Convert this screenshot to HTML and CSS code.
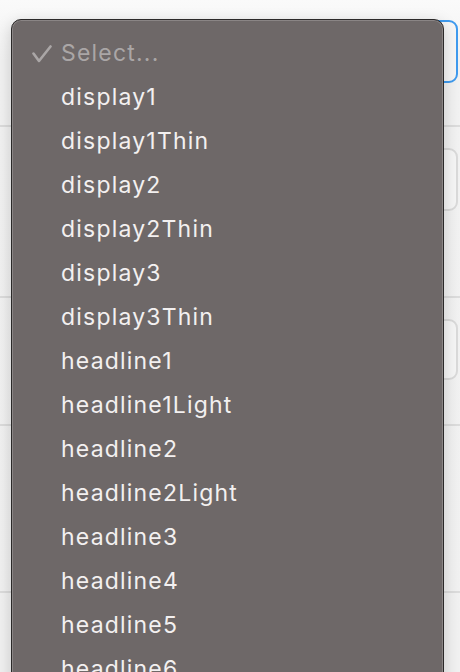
FILE: index.html
```html
<!DOCTYPE html>
<html lang="en">
<head>
    <meta charset="UTF-8">
    <meta name="viewport" content="width=device-width, initial-scale=1.0">
    <title>Text Style Picker</title>
    <link rel="stylesheet" href="styles.css">
</head>
<body>
    <!-- Form behind the open popup -->
    <div class="form">
        <div class="form-row row-first">
            <div class="field field-focus"></div>
        </div>
        <div class="form-row row-second">
            <div class="field"></div>
        </div>
        <div class="form-row row-third">
            <div class="field"></div>
        </div>
        <div class="form-row row-fourth"></div>
        <div class="form-row row-fifth"></div>
    </div>

    <!-- Open popup menu -->
    <div class="menu">
        <ul class="menu-list">
            <li class="menu-item placeholder">
                <span class="check">
                    <svg width="20" height="20" viewBox="0 0 20 20"><polyline points="1.5,8.5 7,16 18.5,1.5" fill="none" stroke="currentColor" stroke-width="2.6" stroke-linecap="round" stroke-linejoin="round"/></svg>
                </span>Select...
            </li>
            <li class="menu-item"><span class="check"></span>display1</li>
            <li class="menu-item"><span class="check"></span>display1Thin</li>
            <li class="menu-item"><span class="check"></span>display2</li>
            <li class="menu-item"><span class="check"></span>display2Thin</li>
            <li class="menu-item"><span class="check"></span>display3</li>
            <li class="menu-item"><span class="check"></span>display3Thin</li>
            <li class="menu-item"><span class="check"></span>headline1</li>
            <li class="menu-item"><span class="check"></span>headline1Light</li>
            <li class="menu-item"><span class="check"></span>headline2</li>
            <li class="menu-item"><span class="check"></span>headline2Light</li>
            <li class="menu-item"><span class="check"></span>headline3</li>
            <li class="menu-item"><span class="check"></span>headline4</li>
            <li class="menu-item"><span class="check"></span>headline5</li>
            <li class="menu-item"><span class="check"></span>headline6</li>
        </ul>
    </div>
</body>
</html>
```

FILE: styles.css
```css
/* Page */
body {
    margin: 0;
    height: 672px;
    overflow: hidden;
    position: relative;
    font-family: 'Inter', 'Roboto', sans-serif;
    background: linear-gradient(180deg, #fafafa 0%, #f2f2f2 60px, #f1f1f1 100%);
}

/* Form rows behind the menu */
.form {
    display: flex;
    flex-direction: column;
}

.form-row {
    display: flex;
    justify-content: flex-end;
    align-items: flex-start;
    border-bottom: 2px solid #dcdcdc;
    box-sizing: border-box;
}

.row-first {
    height: 127px;
    padding: 20px 2px 0 0;
}

.row-second {
    height: 171px;
    padding: 21px 2px 0 0;
}

.row-third {
    height: 128px;
    padding: 21px 2px 0 0;
}

.row-fourth {
    height: 167px;
}

.row-fifth {
    height: 90px;
    border-bottom: none;
}

.field {
    width: 260px;
    height: 63px;
    border: 2px solid #dadada;
    border-radius: 9px;
    box-sizing: border-box;
    background: #f6f6f6;
}

.field-focus {
    height: 63px;
    border-color: #3f9bef;
}

.row-third .field {
    height: 61px;
}

/* Popup menu */
.menu {
    position: absolute;
    top: 19px;
    left: 11px;
    width: 433px;
    height: 700px;
    box-sizing: border-box;
    background: #6e6868;
    border: 1px solid #2b2929;
    border-radius: 10px;
    box-shadow: inset 0 0 0 1px #8a8585, 0 4px 16px rgba(0, 0, 0, 0.18);
}

.menu-list {
    list-style: none;
    margin: 0;
    padding: 11px 0 0 0;
}

.menu-item {
    display: flex;
    align-items: center;
    height: 44px;
    font-size: 23px;
    color: #f3f0f0;
    letter-spacing: 1.2px;
}

.check {
    display: flex;
    align-items: center;
    width: 29px;
    padding-left: 20px;
    padding-top: 4px;
}

.placeholder {
    color: #aaa6a6;
}
```
